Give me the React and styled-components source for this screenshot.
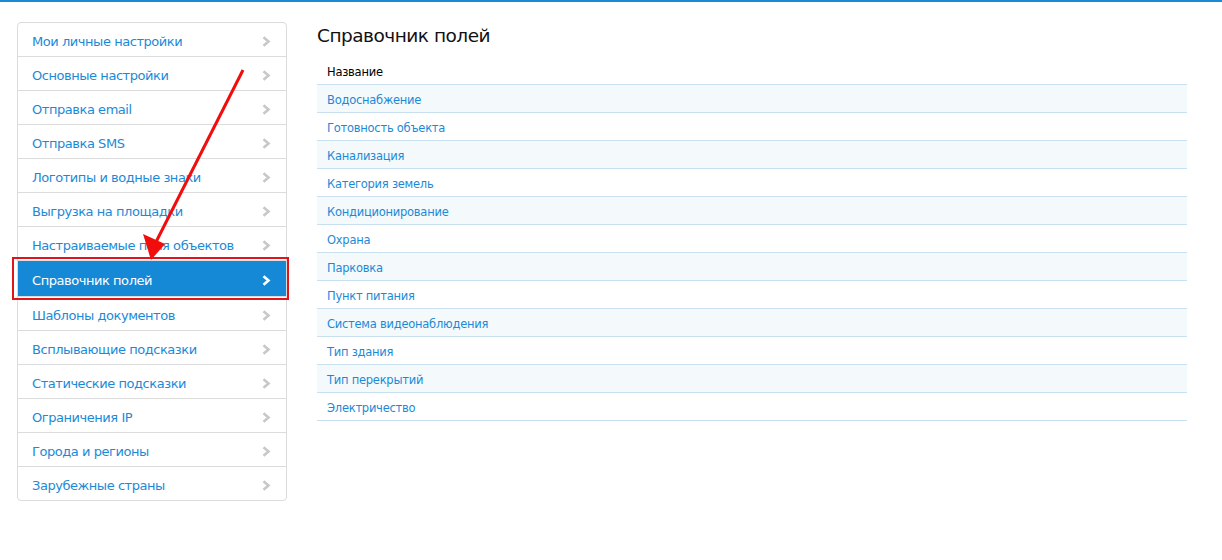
import React from "react";
import styled, { createGlobalStyle } from "styled-components";

const GlobalStyle = createGlobalStyle`
  body {
    margin: 0;
    background: #fff;
    font-family: "DejaVu Sans", Verdana, sans-serif;
  }
`;

const TopBar = styled.div`
  height: 2px;
  background: #1a8ad4;
`;

const Page = styled.div`
  position: relative;
  display: flex;
  align-items: flex-start;
  gap: 30px;
  padding: 20px 35px 0 17px;
`;

const Sidebar = styled.ul`
  list-style: none;
  margin: 0;
  padding: 0;
  width: 268px;
  flex-shrink: 0;
  border: 1px solid #dcdcdc;
  border-radius: 4px;
`;

const MenuItem = styled.li`
  box-sizing: border-box;
  display: flex;
  align-items: center;
  justify-content: space-between;
  height: ${(p) => (p.$active ? "36px" : "34px")};
  padding: 3px 15px 0 14px;
  border-bottom: 1px solid #dcdcdc;
  font-size: 13px;
  letter-spacing: -0.45px;
  color: ${(p) => (p.$active ? "#fff" : "#1b8ad6")};
  background: ${(p) => (p.$active ? "#1689d6" : "transparent")};
  position: relative;

  &:last-child {
    height: 33px;
    border-bottom: none;
  }
`;

const Highlight = styled.div`
  position: absolute;
  left: -6px;
  right: -3px;
  top: -4px;
  bottom: -4px;
  border: 2px solid #e0141b;
  pointer-events: none;
`;

const Content = styled.div`
  flex: 1;
`;

const Title = styled.h1`
  margin: 3px 0 10px;
  font-size: 18.5px;
  letter-spacing: -0.5px;
  font-weight: normal;
  color: #111;
`;

const Table = styled.div`
  display: flex;
  flex-direction: column;
`;

const HeadCell = styled.div`
  box-sizing: border-box;
  height: 29px;
  display: flex;
  align-items: center;
  padding: 3px 0 0 10px;
  font-size: 11.5px;
  letter-spacing: -0.25px;
  color: #000;
  border-bottom: 1px solid #c9e0f1;
`;

const Row = styled.div`
  box-sizing: border-box;
  height: 28px;
  display: flex;
  align-items: center;
  padding: 2px 0 0 10px;
  font-size: 11.5px;
  letter-spacing: -0.25px;
  color: #1b8ad6;
  background: ${(p) => (p.$odd ? "#f4f9fc" : "#fff")};
  border-bottom: 1px solid #c9e0f1;
`;

const Overlay = styled.svg`
  position: absolute;
  left: 0;
  top: 0;
  pointer-events: none;
`;

const Chevron = ({ color }) => (
  <svg width="9" height="11" viewBox="0 0 9 11">
    <path d="M1.5 1.2 L6.5 5.5 L1.5 9.8" fill="none" stroke={color} strokeWidth="2.6" />
  </svg>
);

const menu = [
  "Мои личные настройки",
  "Основные настройки",
  "Отправка email",
  "Отправка SMS",
  "Логотипы и водные знаки",
  "Выгрузка на площадки",
  "Настраиваемые поля объектов",
  "Справочник полей",
  "Шаблоны документов",
  "Всплывающие подсказки",
  "Статические подсказки",
  "Ограничения IP",
  "Города и регионы",
  "Зарубежные страны",
];

const fields = [
  "Водоснабжение",
  "Готовность объекта",
  "Канализация",
  "Категория земель",
  "Кондиционирование",
  "Охрана",
  "Парковка",
  "Пункт питания",
  "Система видеонаблюдения",
  "Тип здания",
  "Тип перекрытий",
  "Электричество",
];

export default function App() {
  return (
    <>
      <GlobalStyle />
      <TopBar />
      <Page>
        <Sidebar>
          {menu.map((name) => {
            const active = name === "Справочник полей";
            return (
              <MenuItem key={name} $active={active}>
                <span>{name}</span>
                <Chevron color={active ? "#fff" : "#c8c8c8"} />
                {active && <Highlight />}
              </MenuItem>
            );
          })}
        </Sidebar>
        <Content>
          <Title>Справочник полей</Title>
          <Table>
            <HeadCell>Название</HeadCell>
            {fields.map((f, i) => (
              <Row key={f} $odd={i % 2 === 0}>
                {f}
              </Row>
            ))}
          </Table>
        </Content>
        <Overlay width="300" height="300">
          <line x1="243" y1="68" x2="156" y2="240" stroke="#f20d0d" strokeWidth="3" />
          <polygon points="151,258 143,232 165,242" fill="#f20d0d" />
        </Overlay>
      </Page>
    </>
  );
}
